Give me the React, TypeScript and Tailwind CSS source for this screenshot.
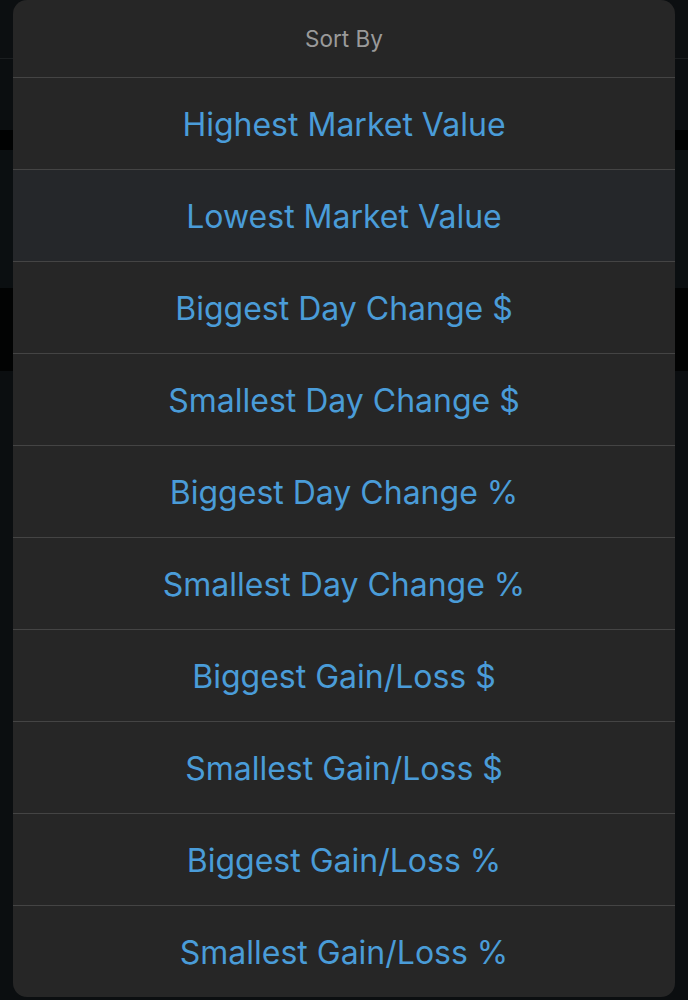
import React from 'react';

const options = [
  'Highest Market Value',
  'Lowest Market Value',
  'Biggest Day Change $',
  'Smallest Day Change $',
  'Biggest Day Change %',
  'Smallest Day Change %',
  'Biggest Gain/Loss $',
  'Smallest Gain/Loss $',
  'Biggest Gain/Loss %',
  'Smallest Gain/Loss %',
];

const App: React.FC = () => {
  return (
    <div className="relative w-[688px] h-[1000px] overflow-hidden bg-[#0b0e10] font-['Inter',sans-serif]">
      {/* page behind the sheet */}
      <div className="flex flex-col">
        <div className="h-[59px] bg-[#0c0f11] border-b border-[#1b1e20]" />
        <div className="h-[71px] bg-[#0b0e10]" />
        <div className="h-[20px] bg-[#010202]" />
        <div className="h-[138px] bg-[#0b0f11]" />
        <div className="h-[83px] bg-[#020303]" />
      </div>

      {/* action sheet */}
      <div className="absolute left-[13px] top-0 w-[662px] h-[997px] rounded-[14px] bg-[#262626] overflow-hidden flex flex-col">
        <div className="h-[77px] flex items-center justify-center text-[22.5px] text-[#9a9a9a]">Sort By</div>
        {options.map((o, i) => (
          <div
            key={o}
            className={`h-[92px] flex items-center justify-center border-t border-[#444444] text-[32px] text-[#4a9cd8] ${i === 1 ? 'bg-[#25272a]' : ''}`}
          >
            <span className="translate-y-[1px]">{o}</span>
          </div>
        ))}
      </div>
    </div>
  );
};

export default App;
